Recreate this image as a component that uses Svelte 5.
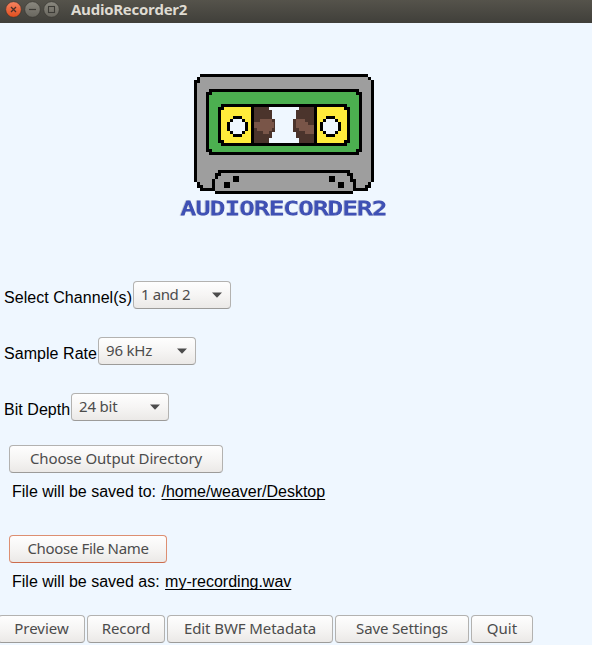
<script>
  const settings = [
    { label: 'Select Channel(s)', value: '1 and 2', w: 128, sp: -0.4 },
    { label: 'Sample Rate', value: '96 kHz', w: 93, sp: -0.2 },
    { label: 'Bit Depth', value: '24 bit', w: 66, sp: -0.2 }
  ];
  const actions = [
    { name: 'Preview', w: 87, sp: 0 },
    { name: 'Record', w: 78, sp: -0.1 },
    { name: 'Edit BWF Metadata', w: 166, sp: -0.08 },
    { name: 'Save Settings', w: 134, sp: -0.15 },
    { name: 'Quit', w: 62, sp: 0.1 }
  ];
</script>

<div class="window">
  <header>
    <svg width="64" height="23" viewBox="0 0 64 23">
      <defs>
        <linearGradient id="close" x1="0" y1="0" x2="0" y2="1"><stop offset="0" stop-color="#f58462" /><stop offset="1" stop-color="#e24e1d" /></linearGradient>
        <linearGradient id="grey" x1="0" y1="0" x2="0" y2="1"><stop offset="0" stop-color="#8b8980" /><stop offset="1" stop-color="#68665e" /></linearGradient>
      </defs>
      <circle cx="13.5" cy="9.5" r="7.8" fill="url(#close)" stroke="#34332e" stroke-width=".6" />
      <path d="M11 7l5 5M16 7l-5 5" stroke="#4b3028" stroke-width="1.3" />
      <circle cx="32.5" cy="9.5" r="7.8" fill="url(#grey)" stroke="#34332e" stroke-width=".6" />
      <path d="M29 9.5h7" stroke="#3c3b36" stroke-width="1.2" />
      <circle cx="51.5" cy="9.5" r="7.8" fill="url(#grey)" stroke="#34332e" stroke-width=".6" />
      <rect x="48.5" y="6.5" width="6" height="6" fill="none" stroke="#3c3b36" stroke-width="1.1" />
    </svg>
    <h1>AudioRecorder2</h1>
  </header>

  <svg class="logo" width="212" height="150" viewBox="178 70 212 150" shape-rendering="crispEdges">
    <!-- shell -->
    <path fill="#000" d="M200 74H368V77H371V80H374V182H371V188H368V191H353V194H215V191H200V188H197V182H194V80H197V77H200Z" />
    <path fill="#9e9e9e" d="M200 77H368V80H371V182H368V185H365V188H356V179H353V173H350V170H218V173H215V179H212V188H203V185H200V182H197V83H200Z" />
    <path fill="#000" d="M218 170H350V173H353V179H356V188H353V191H215V188H212V179H215V173H218Z" />
    <path fill="#9e9e9e" d="M221 173H347V176H350V182H353V191H215V188H215V179H218V176H221Z" />
    <!-- label -->
    <path fill="#000" d="M209 89H359V92H362V152H359V155H209V152H206V92H209Z" />
    <path fill="#4caf50" d="M212 92H356V95H359V149H356V152H212V149H209V95H212Z" />
    <path fill="#000" d="M221 104H347V107H350V143H347V146H221V143H218V107H221Z" />
    <path fill="#ffeb3b" d="M224 107H251V143H224V140H221V110H224ZM317 107H344V110H347V140H344V143H317Z" />
    <path fill="#eff7ff" d="M254 107H314V143H254Z" />
    <!-- tape -->
    <path fill="#4b342c" d="M254 107H269V110H272V119H275V132H272V138H269V143H254ZM314 107H299V110H296V119H293V132H296V138H299V143H314Z" />
    <path fill="#795548" d="M260 119H272V122H274V128H272V131H269V134H263V131H257V128H254V122H260ZM296 119H305V122H308V125H314V134H305V131H299V128H296Z" />
    <!-- reels -->
    {#each [227, 320] as x}
      <g transform="translate({x} 116)">
        <path fill="#000" d="M6 0H15V3H18V6H21V15H18V18H15V21H6V18H3V15H0V6H3V3H6Z" />
        <path fill="#eff7ff" d="M6 3H15V6H18V15H15V18H6V15H3V6H6Z" />
      </g>
    {/each}
    <path d="M233 176h6v6h-6zM224 182h6v6h-6zM329 176h6v6h-6zM338 182h6v6h-6z" />
    <text x="181" y="214.5" textLength="206" lengthAdjust="spacingAndGlyphs">AUDIORECORDER2</text>
  </svg>

  <section class="settings">
    {#each settings as s}
      <div class="row">
        <span class="label" style="width:{s.w}px">{s.label}</span>
        <button class="select"><span style="letter-spacing:{s.sp}px">{s.value}</span><svg width="12" height="6"><path d="M1 0.5H11L6 5.8Z" fill="#4c4c4c" /></svg></button>
      </div>
    {/each}
  </section>

  <section class="file">
    <button style="width:214px;letter-spacing:-0.15px">Choose Output Directory</button>
    <p>File will be saved to: <span>/home/weaver/Desktop</span></p>
  </section>
  <section class="file second">
    <button class="focus" style="width:158px;letter-spacing:-0.35px">Choose File Name</button>
    <p>File will be saved as: <span>my-recording.wav</span></p>
  </section>

  <footer>
    {#each actions as a}
      <button style="width:{a.w}px;letter-spacing:{a.sp}px">{a.name}</button>
    {/each}
  </footer>
</div>

<style>
  :global(body) { margin: 0; overflow: hidden; }
  .window {
    width: 592px; height: 645px; overflow: hidden;
    display: flex; flex-direction: column; align-items: flex-start;
    background: #eff7ff; color: #000;
    font: 16px/20px "Liberation Sans", Arial, sans-serif;
  }
  header {
    width: 100%; height: 23px; flex: none; display: flex;
    background: linear-gradient(#55534b, #403f3a);
  }
  h1 {
    margin: 0 0 0 7px; color: #dfdbd2; letter-spacing: -0.27px;
    font: bold 15px/19px "Open Sans", "Noto Sans", sans-serif;
  }
  .logo { display: block; flex: none; margin: 47px 0 0 178px; }
  .logo text {
    font: 19.5px "DejaVu Sans Mono", monospace;
    fill: #3f51b5; stroke: #3f51b5; stroke-width: 1.1px; stroke-linejoin: miter;
    filter: drop-shadow(-1px 0 0 #c8cbd2);
  }
  .settings { margin-top: 61px; display: flex; flex-direction: column; gap: 28px; }
  .row { display: flex; height: 28px; padding-left: 4px; }
  .label { margin-right: 1px; padding-top: 7px; box-sizing: border-box; white-space: nowrap; letter-spacing: 0.05px; }
  button {
    box-sizing: border-box; height: 28px; flex: none; padding: 0 0 1px;
    border: 1px solid #b3b2b0; border-bottom-color: #9c9b99; border-radius: 4px;
    background: linear-gradient(#fefefe, #f6f5f4 50%, #ebe9e7);
    color: #4c4c4c; white-space: nowrap;
    font: 15px/25px "Noto Sans", "Open Sans", sans-serif;
  }
  .select { width: 98px; display: flex; align-items: center; justify-content: space-between; padding: 0 7px 1px; }
  .select svg { margin-top: 1px; }
  .focus { border-color: #dd8f72; border-bottom-color: #cc6c4c; }
  .file { margin: 24px 0 0 9px; }
  .file button { display: block; }
  .file p { margin: 9px 0 0 3px; }
  .file p span { margin-left: 1px; text-decoration: underline; text-decoration-thickness: 1px; text-underline-offset: 2px; text-decoration-skip-ink: none; }
  .second { margin-top: 33px; }
  footer { display: flex; gap: 2px; margin: 23px 0 0 -2px; }
</style>
